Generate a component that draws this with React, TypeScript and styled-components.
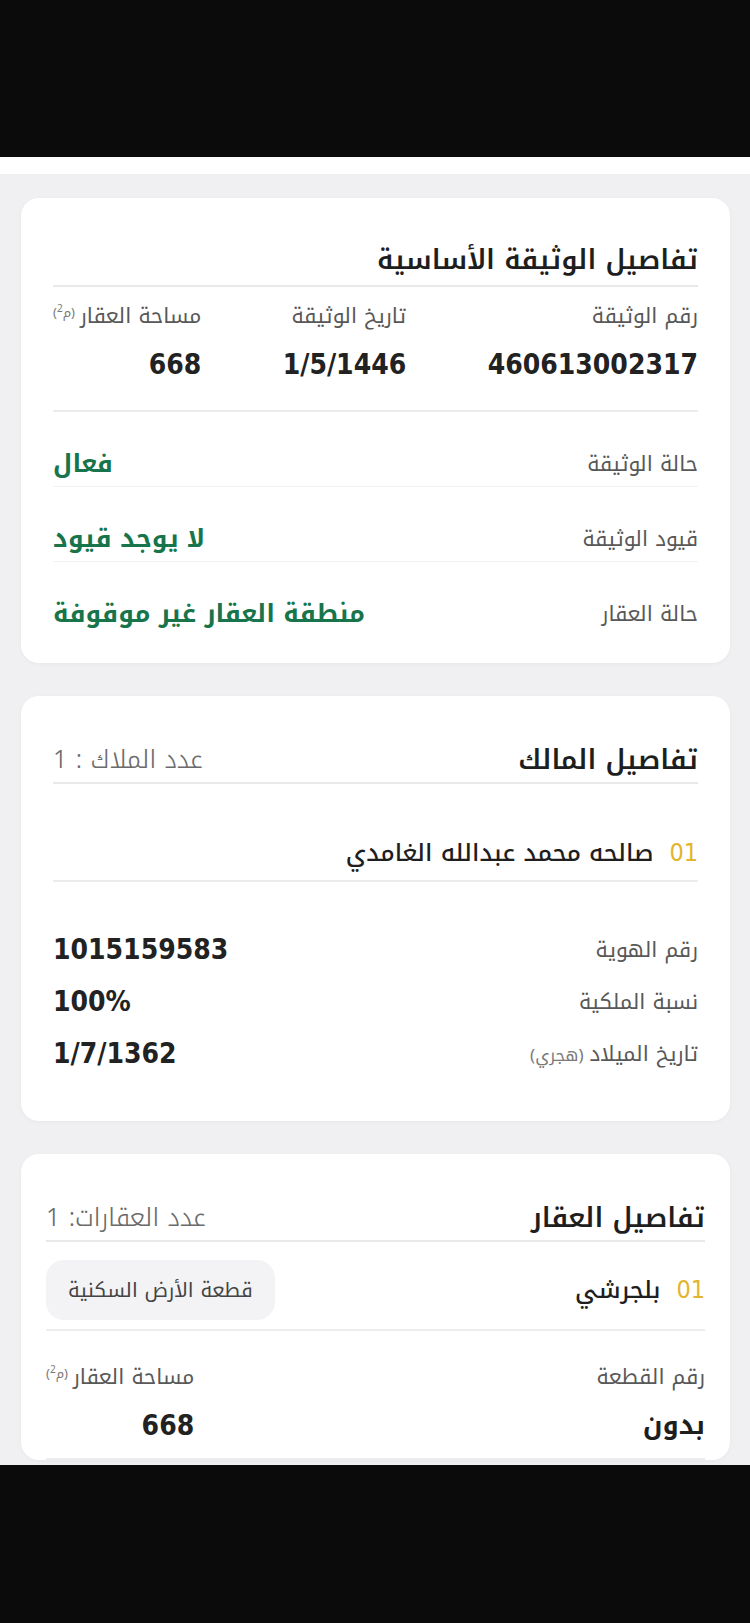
import React from "react";
import styled, { createGlobalStyle } from "styled-components";

const AR = `"Noto Kufi Arabic", "Noto Sans Arabic", "DejaVu Sans", sans-serif`;
const NUM = `"DejaVu Sans Condensed", "DejaVu Sans", sans-serif`;

const GlobalStyle = createGlobalStyle`
  html, body { margin: 0; padding: 0; background: #0b0b0b; }
  body { font-family: ${AR}; }
  * { box-sizing: border-box; }
`;

const Screen = styled.div`
  width: 750px;
  height: 1623px;
  background: #0b0b0b;
  display: flex;
  flex-direction: column;
`;

const TopBar = styled.div`
  height: 157px;
  flex: none;
  background: #0b0b0b;
`;

const WhiteStrip = styled.div`
  height: 17px;
  flex: none;
  background: #ffffff;
`;

const Content = styled.main`
  height: 1291px;
  flex: none;
  overflow: hidden;
  background: #f0f0f2;
  padding: 24px 20px 0 21px;
  display: flex;
  flex-direction: column;
  gap: 33px;
  direction: rtl;
  font-family: ${AR};
`;

const Card = styled.section<{ $pad?: number }>`
  background: #ffffff;
  border-radius: 18px;
  box-shadow: 0 1px 4px rgba(0, 0, 0, 0.04);
  padding: 0 ${(p) => p.$pad ?? 32}px;
  flex: none;
`;

const Header = styled.div<{ $top: number; $bottom: number }>`
  display: flex;
  align-items: center;
  justify-content: space-between;
  padding: ${(p) => p.$top}px 0 ${(p) => p.$bottom}px;
  border-bottom: 2px solid #e9e9eb;
`;

const Title = styled.h2`
  margin: 0;
  font-size: 27px;
  line-height: 34px;
  font-weight: 600;
  color: #1e1e1e;
`;

const Count = styled.span`
  font-size: 25px;
  line-height: 34px;
  color: #6b6b6b;
  font-weight: 300;
`;

const FieldGrid = styled.div<{ $top: number; $bottom: number }>`
  display: flex;
  justify-content: space-between;
  padding: ${(p) => p.$top}px 0 ${(p) => p.$bottom}px;
  border-bottom: 2px solid #ececee;
`;

const Field = styled.div`
  display: flex;
  flex-direction: column;
  align-items: flex-start;
  gap: 18px;
`;

const Label = styled.span`
  font-size: 21px;
  line-height: 28px;
  height: 28px;
  color: #585858;
  font-weight: 400;
  white-space: nowrap;
`;

const Unit = styled.span`
  font-size: 13px;
  line-height: 0;
  color: #7a7a7a;
  vertical-align: 6px;
  margin-inline-start: 5px;

  sup {
    line-height: 0;
    font-size: 10px;
  }
`;

const Hint = styled.span`
  font-size: 17px;
  color: #7a7a7a;
  margin-inline-start: 6px;
`;

const NumValue = styled.span`
  font-family: ${NUM};
  font-stretch: condensed;
  font-size: 28px;
  line-height: 34px;
  font-weight: 700;
  color: #222222;
  direction: ltr;
  unicode-bidi: isolate;
`;

const TextValue = styled.span<{ $green?: boolean }>`
  font-size: ${(p) => (p.$green ? 25 : 26)}px;
  line-height: 34px;
  font-weight: 700;
  color: ${(p) => (p.$green ? "#17744b" : "#1e1e1e")};
`;

const StatusRow = styled.div<{ $last?: boolean }>`
  display: flex;
  align-items: center;
  justify-content: space-between;
  height: 30px;
  box-sizing: content-box;
  padding: 37px 0 ${(p) => (p.$last ? 34 : 7)}px;
  border-bottom: ${(p) => (p.$last ? "none" : "1px solid #f1f1f3")};
`;

const ItemRow = styled.div<{ $top: number; $bottom: number }>`
  display: flex;
  align-items: center;
  justify-content: space-between;
  padding: ${(p) => p.$top}px 0 ${(p) => p.$bottom}px;
  border-bottom: 2px solid #ececee;
`;

const ItemName = styled.div`
  display: flex;
  align-items: center;
  gap: 16px;
  font-size: 24px;
  line-height: 30px;
  color: #1e1e1e;
  font-weight: 500;
`;

const Index = styled.span`
  font-family: ${NUM};
  font-stretch: condensed;
  font-size: 25px;
  color: #e3b52f;
  font-weight: 400;
`;

const Pill = styled.span`
  display: inline-flex;
  align-items: center;
  justify-content: center;
  height: 60px;
  padding: 0 22px;
  border-radius: 18px;
  background: #f3f3f5;
  font-size: 20px;
  font-weight: 400;
  color: #444444;
`;

const InfoList = styled.div`
  display: flex;
  flex-direction: column;
  gap: 18px;
  padding: 51px 0 50px;
`;

const InfoRow = styled.div`
  display: flex;
  align-items: center;
  justify-content: space-between;
  height: 34px;
`;

export default function App() {
  return (
    <>
      <GlobalStyle />
      <Screen>
        <TopBar />
        <WhiteStrip />
        <Content>
          <Card>
            <Header $top={45} $bottom={8}>
              <Title>تفاصيل الوثيقة الأساسية</Title>
            </Header>
            <FieldGrid $top={15} $bottom={28}>
              <Field>
                <Label>رقم الوثيقة</Label>
                <NumValue>460613002317</NumValue>
              </Field>
              <Field>
                <Label>تاريخ الوثيقة</Label>
                <NumValue>1/5/1446</NumValue>
              </Field>
              <Field>
                <Label>
                  مساحة العقار
                  <Unit>
                    (م<sup>2</sup>)
                  </Unit>
                </Label>
                <NumValue>668</NumValue>
              </Field>
            </FieldGrid>
            <StatusRow>
              <Label>حالة الوثيقة</Label>
              <TextValue $green>فعال</TextValue>
            </StatusRow>
            <StatusRow>
              <Label>قيود الوثيقة</Label>
              <TextValue $green>لا يوجد قيود</TextValue>
            </StatusRow>
            <StatusRow $last>
              <Label>حالة العقار</Label>
              <TextValue $green>منطقة العقار غير موقوفة</TextValue>
            </StatusRow>
          </Card>

          <Card>
            <Header $top={47} $bottom={5}>
              <Title>تفاصيل المالك</Title>
              <Count>عدد الملاك : 1</Count>
            </Header>
            <ItemRow $top={54} $bottom={12}>
              <ItemName>
                <Index>01</Index>
                <span>صالحه محمد عبدالله الغامدي</span>
              </ItemName>
            </ItemRow>
            <InfoList>
              <InfoRow>
                <Label>رقم الهوية</Label>
                <NumValue>1015159583</NumValue>
              </InfoRow>
              <InfoRow>
                <Label>نسبة الملكية</Label>
                <NumValue>100%</NumValue>
              </InfoRow>
              <InfoRow>
                <Label>
                  تاريخ الميلاد
                  <Hint>(هجري)</Hint>
                </Label>
                <NumValue>1/7/1362</NumValue>
              </InfoRow>
            </InfoList>
          </Card>

          <Card $pad={25}>
            <Header $top={47} $bottom={5}>
              <Title>تفاصيل العقار</Title>
              <Count>عدد العقارات: 1</Count>
            </Header>
            <ItemRow $top={18} $bottom={9}>
              <ItemName>
                <Index>01</Index>
                <span>بلجرشي</span>
              </ItemName>
              <Pill>قطعة الأرض السكنية</Pill>
            </ItemRow>
            <FieldGrid $top={32} $bottom={15}>
              <Field>
                <Label>رقم القطعة</Label>
                <TextValue>بدون</TextValue>
              </Field>
              <Field>
                <Label>
                  مساحة العقار
                  <Unit>
                    (م<sup>2</sup>)
                  </Unit>
                </Label>
                <NumValue>668</NumValue>
              </Field>
            </FieldGrid>
          </Card>
        </Content>
      </Screen>
    </>
  );
}
